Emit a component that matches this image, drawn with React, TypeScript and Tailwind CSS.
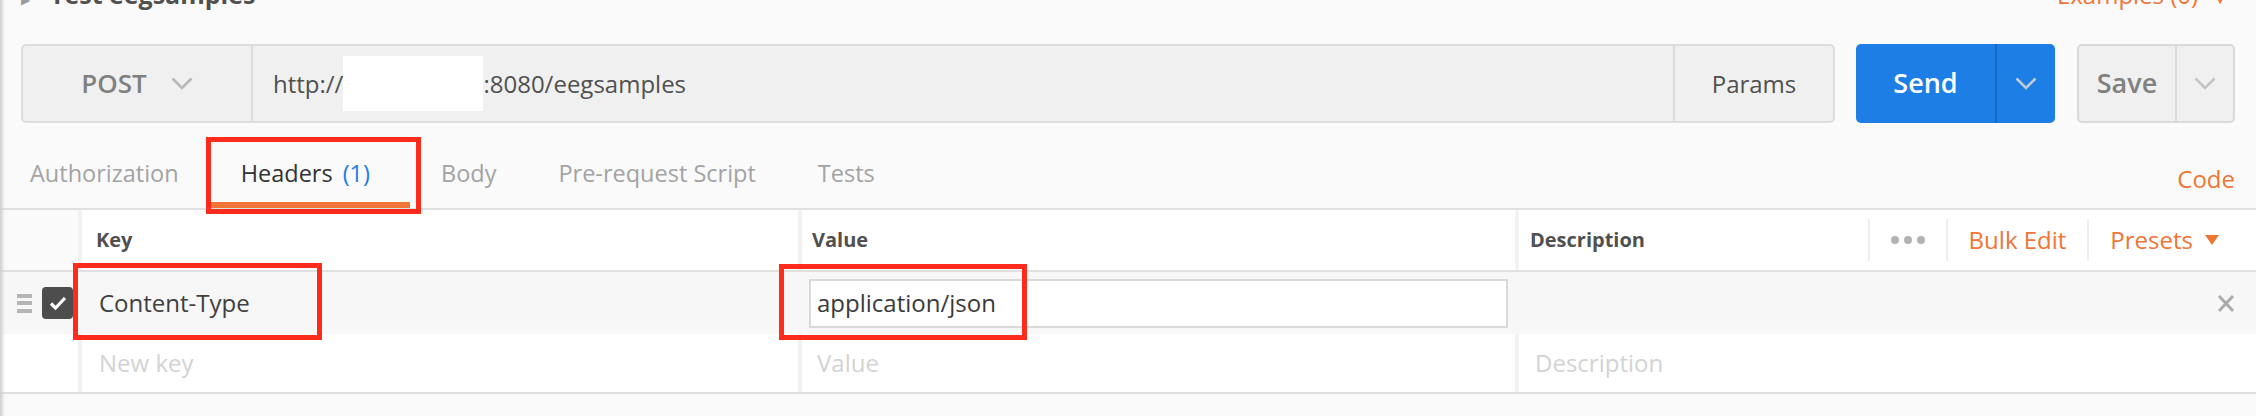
import React from 'react';

const Chevron = ({ className }: { className: string }) => (
  <svg width="22" height="13" viewBox="0 0 22 13" className={className}>
    <polyline points="1.5,1.5 11,11 20.5,1.5" fill="none" stroke="currentColor" strokeWidth="2.5" />
  </svg>
);

const tabs = ['Authorization', 'Headers', 'Body', 'Pre-request Script', 'Tests'];

export default function App() {
  return (
    <div className="relative w-[2256px] h-[416px] overflow-hidden bg-[#fafafa] font-['Open_Sans',sans-serif]">
      {/* sidebar shadow */}
      <div className="pointer-events-none absolute inset-y-0 left-0 w-[5px] bg-gradient-to-r from-[#cfcfcf] to-transparent" />

      {/* title row, mostly scrolled off */}
      <div className="-mt-[18px] flex h-[25px] items-baseline justify-between pl-[21px] pr-[28px] leading-[25px]">
        <div className="flex items-baseline gap-[20px]">
          <span className="text-[12px] text-[#9a9a9a]">▶</span>
          <span className="text-[25px] font-bold text-[#505050]">Test eegsamples</span>
        </div>
        <div className="flex items-baseline gap-[14px] text-[24px] text-[#f07536]">
          <span>Examples (0)</span>
          <span className="text-[16px]">▼</span>
        </div>
      </div>

      {/* request bar */}
      <div className="mt-[37px] flex h-[79px] px-[21px]">
        <div className="flex flex-1 rounded-[5px] border-2 border-[#dcdcdc] bg-[#f0f0f0]">
          <div className="flex w-[230px] items-center justify-center gap-[24px] border-r-2 border-[#dcdcdc]">
            <span className="text-[26px] font-semibold text-[#808080]">POST</span>
            <Chevron className="text-[#b8b8b8]" />
          </div>
          <div className="flex flex-1 items-center pl-[20px] text-[24px] text-[#505050]">
            <span>http://</span>
            <span className="h-[55px] w-[140px] bg-white" />
            <span>:8080/eegsamples</span>
          </div>
          <div className="flex w-[160px] items-center justify-center border-l-2 border-[#dcdcdc] text-[24px] text-[#505050]">
            Params
          </div>
        </div>

        <div className="ml-[21px] flex w-[199px] rounded-[5px] bg-[#1d7ee6]">
          <div className="flex w-[139px] items-center justify-center text-[27px] font-semibold text-white">Send</div>
          <div className="flex flex-1 items-center justify-center border-l-2 border-[#1767c0]">
            <Chevron className="text-[#c4cbd4]" />
          </div>
        </div>

        <div className="ml-[22px] flex w-[158px] rounded-[5px] border-2 border-[#dadada] bg-[#f0f0f0]">
          <div className="flex w-[96px] items-center justify-center text-[27px] font-semibold text-[#808080]">Save</div>
          <div className="flex flex-1 items-center justify-center border-l-2 border-[#dadada]">
            <Chevron className="text-[#c4c4c4]" />
          </div>
        </div>
      </div>

      {/* tabs */}
      <div className="flex h-[87px] border-b-2 border-[#e0e0e0] text-[23.5px]">
        {tabs.map((t) =>
          t === 'Headers' ? (
            <div key={t} className="flex items-center border-b-[6px] border-[#f07536] pl-[31px] pr-[40px] pt-[22px] text-[#333333]">
              Headers<span className="ml-[10px] text-[#1d7ee6]">(1)</span>
            </div>
          ) : (
            <div
              key={t}
              className={`flex items-center border-b-[6px] border-transparent px-[31px] pt-[22px] text-[#a3a3a3] ${t === 'Authorization' ? '-ml-[1px]' : ''}`}
            >
              {t}
            </div>
          )
        )}
        <div className="ml-auto flex items-center pr-[21px] pt-[26px] text-[24px] text-[#f07536]">Code</div>
      </div>

      {/* header row */}
      <div className="flex h-[62px] border-b-2 border-[#e0e0e0] bg-white">
        <div className="w-[78px] bg-[#fafafa]" />
        <div className="flex w-[720px] items-center border-l-4 border-[#f2f2f2] pl-[14px] text-[20px] font-bold text-[#505050]">Key</div>
        <div className="flex w-[717px] items-center border-l-4 border-[#f2f2f2] pl-[10px] text-[20px] font-bold text-[#505050]">Value</div>
        <div className="flex flex-1 items-center border-l-4 border-[#f2f2f2] pl-[11px]">
          <span className="text-[20px] font-bold text-[#505050]">Description</span>
          <div className="ml-auto flex items-center pr-[37px] text-[24px] text-[#f07536]">
            <div className="flex h-[42px] items-center gap-[5px] border-l-2 border-[#eeeeee] px-[21px]">
              <span className="h-[8px] w-[8px] rounded-full bg-[#b3b3b3]" />
              <span className="h-[8px] w-[8px] rounded-full bg-[#b3b3b3]" />
              <span className="h-[8px] w-[8px] rounded-full bg-[#b3b3b3]" />
            </div>
            <div className="flex h-[42px] items-center border-l-2 border-[#eeeeee] px-[21px]">Bulk Edit</div>
            <div className="flex h-[42px] items-center gap-[12px] border-l-2 border-[#eeeeee] pl-[21px]">
              <span>Presets</span>
              <svg width="14" height="10" viewBox="0 0 14 10">
                <polygon points="0,0 14,0 7,10" fill="#f07536" />
              </svg>
            </div>
          </div>
        </div>
      </div>

      {/* header entry */}
      <div className="flex h-[62px] bg-[#f7f7f7] text-[24px]">
        <div className="flex w-[78px] items-center gap-[10px] pl-[17px]">
          <div className="flex w-[15px] flex-col gap-[3.5px]">
            <span className="h-[4px] bg-[#b4b4b4]" />
            <span className="h-[4px] bg-[#b4b4b4]" />
            <span className="h-[4px] bg-[#b4b4b4]" />
          </div>
          <div className="flex h-[32px] w-[31px] items-center justify-center rounded-[4px] bg-[#4d4d4d]">
            <svg width="18" height="14" viewBox="0 0 18 14">
              <polyline points="2,7.5 6.5,12 16,2" fill="none" stroke="white" strokeWidth="3.2" />
            </svg>
          </div>
        </div>
        <div className="flex w-[720px] items-center border-l-4 border-transparent pl-[17px] text-[#404040]">Content-Type</div>
        <div className="flex w-[717px] items-center border-l-4 border-transparent px-[7px]">
          <div className="flex h-[49px] flex-1 items-center border-2 border-[#d9d9d9] bg-white pl-[6px] text-[#3a3a3a]">
            application/json
          </div>
        </div>
        <div className="flex flex-1 items-center justify-end border-l-4 border-transparent pr-[21px]">
          <svg width="18" height="19" viewBox="0 0 18 19">
            <path d="M2 2 L16 17 M16 2 L2 17" stroke="#ababab" strokeWidth="3" />
          </svg>
        </div>
      </div>

      {/* new entry row */}
      <div className="flex h-[60px] border-b-2 border-[#dedede] bg-white text-[24px] text-[#d3d3d3]">
        <div className="w-[78px]" />
        <div className="flex w-[720px] items-center border-l-4 border-[#f2f2f2] pl-[17px]">New key</div>
        <div className="flex w-[717px] items-center border-l-4 border-[#f2f2f2] pl-[15px]">Value</div>
        <div className="flex flex-1 items-center border-l-4 border-[#f2f2f2] pl-[16px]">Description</div>
      </div>

      {/* annotation boxes */}
      <div className="pointer-events-none absolute left-[206px] top-[137px] h-[77px] w-[215px] border-[5px] border-[#ff2b1c]" />
      <div className="pointer-events-none absolute left-[73px] top-[263px] h-[77px] w-[249px] border-[5px] border-[#ff2b1c]" />
      <div className="pointer-events-none absolute left-[779px] top-[264px] h-[76px] w-[248px] border-[5px] border-[#ff2b1c]" />
    </div>
  );
}
